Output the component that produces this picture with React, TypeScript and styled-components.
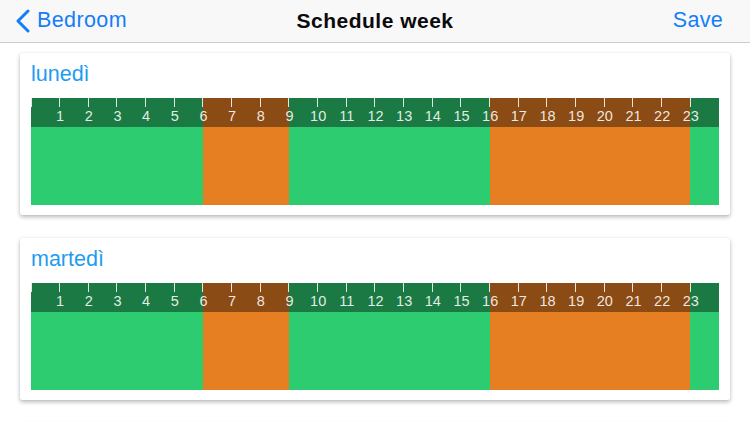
import React from "react";
import styled, { createGlobalStyle } from "styled-components";

const GlobalStyle = createGlobalStyle`
  html, body { margin: 0; padding: 0; background: #ffffff; }
  body { font-family: "Liberation Sans", Arial, sans-serif; overflow: hidden; }
  * { box-sizing: border-box; }
`;

const GREEN = "#2ecc71";
const ORANGE = "#e67e22";
const HOURS = 24;

type Segment = { from: number; to: number; color: string };

const schedule: Segment[] = [
  { from: 0, to: 6, color: GREEN },
  { from: 6, to: 9, color: ORANGE },
  { from: 9, to: 16, color: GREEN },
  { from: 16, to: 23, color: ORANGE },
  { from: 23, to: 24, color: GREEN },
];

const days = ["lunedì", "martedì", "mercoledì"];

const Page = styled.div`
  width: 750px;
  min-height: 422px;
  display: flex;
  flex-direction: column;
`;

const NavBar = styled.header`
  height: 43px;
  background: #f8f8f8;
  border-bottom: 1px solid #cdcdcd;
  display: grid;
  grid-template-columns: 1fr auto 1fr;
  align-items: center;
  padding: 0 16px 1px 16px;
`;

const BackButton = styled.div`
  display: flex;
  align-items: center;
  gap: 7px;
  color: #157ef7;
  font-size: 21.5px;
  letter-spacing: 0.4px;
`;

const NavTitle = styled.div`
  font-weight: bold;
  font-size: 21px;
  color: #0a0a0a;
  letter-spacing: 0.5px;
`;

const NavAction = styled.div`
  justify-self: end;
  padding-right: 11px;
  color: #157ef7;
  font-size: 21.5px;
  letter-spacing: 0.3px;
`;

const List = styled.main`
  display: flex;
  flex-direction: column;
  gap: 23px;
  padding: 10px 20px 0 20px;
`;

const Card = styled.section`
  background: #ffffff;
  border-radius: 2px;
  box-shadow: 0 2px 4px rgba(0, 0, 0, 0.28), 0 0 1px rgba(0, 0, 0, 0.12);
  padding: 6px 11px 10px 11px;
`;

const DayTitle = styled.h2`
  margin: 0 0 9px 0;
  font-weight: normal;
  font-size: 21.5px;
  line-height: 30px;
  color: #1f9cef;
`;

const Bar = styled.div`
  position: relative;
  display: flex;
  height: 107px;
`;

const Seg = styled.div<{ $color: string }>`
  display: flex;
  flex-direction: column;
  background: ${(p) => p.$color};
`;

const SegHead = styled.div`
  height: 29px;
  background: rgba(0, 0, 0, 0.4);
`;

const Scale = styled.div`
  position: absolute;
  left: 0;
  top: 0;
  right: 0;
  height: 29px;
  display: grid;
  grid-template-columns: repeat(${HOURS}, 1fr);
`;

const HourMark = styled.div`
  position: relative;
  border-left: 1px solid rgba(255, 255, 255, 0.85);
  height: 9px;
  margin-left: -0.5px;
`;

const HourLabel = styled.span`
  position: absolute;
  left: 0;
  top: 10px;
  transform: translateX(-50%);
  font-size: 14.5px;
  line-height: 16px;
  color: rgba(255, 255, 255, 0.88);
  white-space: nowrap;
`;

const Chevron = () => (
  <svg width="14" height="24" viewBox="0 0 14 24" aria-hidden>
    <polyline
      points="12,2 2,12 12,22"
      fill="none"
      stroke="#157ef7"
      strokeWidth="3"
      strokeLinecap="round"
      strokeLinejoin="round"
    />
  </svg>
);

const DayCard = ({ name }: { name: string }) => (
  <Card>
    <DayTitle>{name}</DayTitle>
    <Bar>
      {schedule.map((s, i) => (
        <Seg
          key={i}
          $color={s.color}
          style={{ width: `${((s.to - s.from) / HOURS) * 100}%` }}
        >
          <SegHead />
        </Seg>
      ))}
      <Scale>
        {Array.from({ length: HOURS }, (_, h) => (
          <HourMark key={h}>{h > 0 && <HourLabel>{h}</HourLabel>}</HourMark>
        ))}
      </Scale>
    </Bar>
  </Card>
);

export default function App() {
  return (
    <Page>
      <GlobalStyle />
      <NavBar>
        <BackButton>
          <Chevron />
          Bedroom
        </BackButton>
        <NavTitle>Schedule week</NavTitle>
        <NavAction>Save</NavAction>
      </NavBar>
      <List>
        {days.map((d) => (
          <DayCard key={d} name={d} />
        ))}
      </List>
    </Page>
  );
}
